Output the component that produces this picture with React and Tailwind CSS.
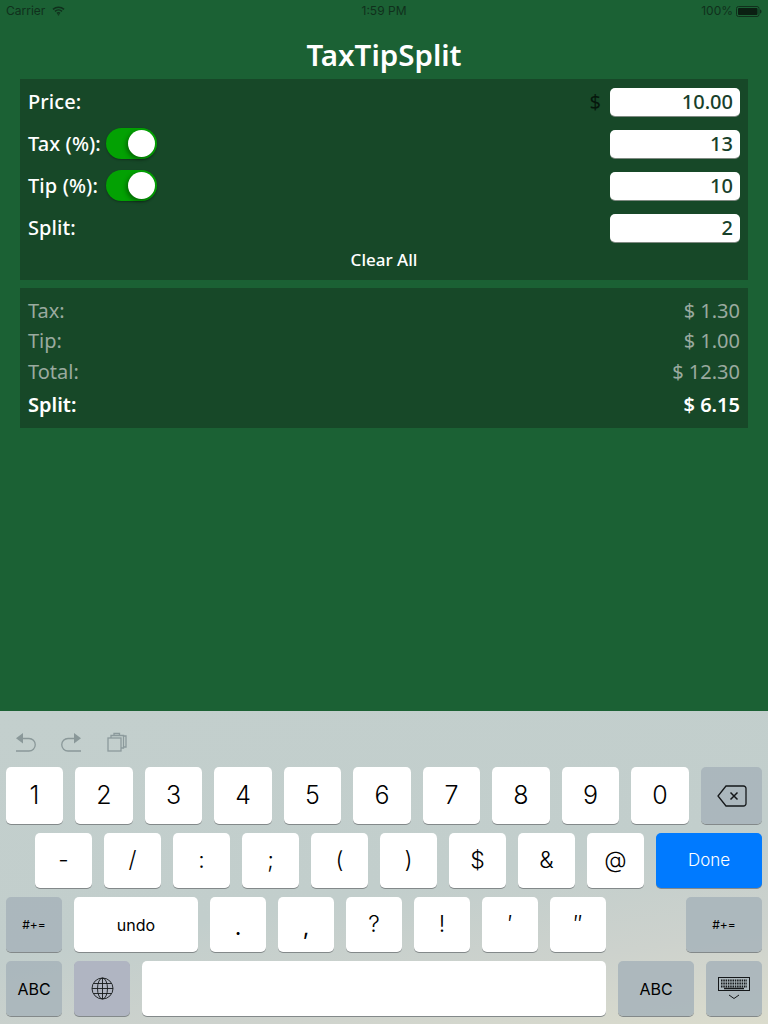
import React from "react";

const inputFont = "font-['Noto_Sans',sans-serif]";
const keyFont = "font-['Inter','Liberation_Sans',sans-serif]";

const Toggle = () => (
  <div className="flex h-[31px] w-[51px] items-center justify-end rounded-full bg-[#03a103] pr-[2px] shadow-[0_1px_2px_rgba(0,0,0,0.3)]">
    <div className="h-[27px] w-[27px] rounded-full bg-white shadow-[-2px_2px_4px_rgba(0,0,0,0.35)]" />
  </div>
);

const FormRow = ({ label, value, toggle, dollar }) => (
  <div className="flex h-[29px] items-center">
    <span className={`${toggle ? "w-[78px] " : ""}text-[20px] font-medium tracking-[0.1px] text-white`}>{label}</span>
    {toggle && <Toggle />}
    {dollar && <span className="ml-auto mr-[9px] text-[20px] text-[#06170c]">$</span>}
    <div className={`${dollar ? "" : "ml-auto "}flex h-[28px] w-[130px] items-center justify-end rounded-[5px] bg-white pr-[7px] text-[20px] font-medium text-[#17402a] shadow-[0_1px_0_#7f8a82]`}>
      {value}
    </div>
  </div>
);

const ResultRow = ({ label, value, h, bright }) => (
  <div className={`flex items-center justify-between ${h} ${bright ? "font-semibold text-white" : "text-[#9aaa9f]"} text-[20px]`}>
    <span>{label}</span>
    <span>{value}</span>
  </div>
);

const Key = ({ children, w, h = "h-[55px]", dark, blue, cls = "" }) => (
  <div
    className={`flex ${h} ${w} items-center justify-center rounded-[5px] shadow-[0_1px_0_#83898a] ${
      blue ? "bg-[#007aff] text-white" : dark ? "bg-[#a9b5bb]/90 text-black" : "bg-white text-black"
    } ${cls}`}
  >
    {children}
  </div>
);

const WifiIcon = () => (
  <svg width="13" height="10" viewBox="0 0 13 10" fill="none" stroke="#10301c" strokeWidth="1.5">
    <path d="M1 3.4C4.2.4 8.8.4 12 3.4" />
    <path d="M3 5.4c2-1.8 5-1.8 7 0" />
    <path d="M5 7.4c.9-.8 2.1-.8 3 0" />
    <path d="M6.5 9.8 5.4 8.6c.6-.5 1.6-.5 2.2 0z" fill="#10301c" stroke="none" />
  </svg>
);

const BatteryIcon = () => (
  <svg width="26" height="11" viewBox="0 0 26 11">
    <rect x=".5" y=".5" width="22.5" height="10" rx="2" fill="none" stroke="#10301c" />
    <rect x="2" y="2" width="19.5" height="7" rx="1" fill="#0b1f12" />
    <path d="M24 3.5c1 .2 1.5 1 1.5 2s-.5 1.800-1.500 2z" fill="#10301c" />
  </svg>
);

const UndoIcon = ({ flip }) => (
  <svg width="21" height="19" viewBox="0 0 21 19" fill="none" stroke="#8a9899" strokeWidth="1.3" className={flip ? "-scale-x-100" : ""}>
    <path d="M3 5.500h11a6 6 0 0 1 0 12.500H1" />
    <path d="M8 0 1 5.200 8 10.500z" fill="#8a9899" stroke="none" />
  </svg>
);

const PasteIcon = () => (
  <svg width="20" height="20" viewBox="0 0 20 20" fill="none" stroke="#8c9a9c" strokeWidth="1.300">
    <rect x="1" y="6" width="13" height="13" />
    <path d="M4 6V3.500h12.500V16H14" />
    <path d="M7 3.500V1.500h5.500V3.500" />
    <path d="M17 4h2v11h-2" />
  </svg>
);

const GlobeIcon = () => (
  <svg width="23" height="23" viewBox="0 0 23 23" fill="none" stroke="#15181a" strokeWidth="0.9">
    <circle cx="11.500" cy="11.500" r="10.500" />
    <ellipse cx="11.500" cy="11.500" rx="5" ry="10.500" />
    <path d="M11.500 1v21M1 11.500h21M2.500 6.500h18M2.500 16.500h18" />
  </svg>
);

const DeleteIcon = () => (
  <svg width="30" height="22" viewBox="0 0 30 22" fill="none" stroke="#15181a" strokeWidth="1.300">
    <path d="M9 1h17.500A2.500 2.500 0 0 1 29 3.500v15a2.500 2.500 0 0 1-2.500 2.500H9L1 11z" />
    <path d="m13.500 7.500 7 7M20.500 7.500l-7 7" strokeWidth="1.500" />
  </svg>
);

const KeyboardIcon = () => (
  <svg width="32" height="24" viewBox="0 0 32 24" fill="none" stroke="#15181a">
    <rect x=".5" y=".5" width="31" height="13" />
    <path d="M3 3.500h26M3 6.500h26M3 9.500h26" strokeWidth="2" strokeDasharray="1.500 0.800" />
    <path d="M6 11.500h20" strokeWidth="1.500" />
    <path d="m11 18 5 3.500 5-3.500" strokeWidth="1" />
  </svg>
);

const row1 = ["1", "2", "3", "4", "5", "6", "7", "8", "9", "0"];
const row2 = ["-", "/", ":", ";", "(", ")", "$", "&", "@"];
const row3 = [".", ",", "?", "!", "′", "″"];

export default function App() {
  return (
    <div className={`flex h-[1024px] w-[768px] flex-col overflow-hidden bg-[#1b6134] ${inputFont}`}>
      {/* status bar */}
      <div className={`flex h-[22px] items-center px-[6px] text-[12px] text-[#10301c] ${keyFont}`}>
        <div className="flex flex-1 items-center gap-[7px]">
          <span>Carrier</span>
          <WifiIcon />
        </div>
        <span>1:59 PM</span>
        <div className="flex flex-1 items-center justify-end gap-[3px]">
          <span>100%</span>
          <BatteryIcon />
        </div>
      </div>

      <h1 className="mt-[13px] h-[44px] text-center text-[29.5px] leading-[40px] font-semibold text-white">TaxTipSplit</h1>

      <div className="mx-5 flex h-[201px] flex-col bg-[#174828] px-2 pt-[8px]">
        <div className="flex flex-col gap-[13px]">
          <FormRow label="Price:" value="10.00" dollar />
          <FormRow label="Tax (%):" value="13" toggle />
          <FormRow label="Tip (%):" value="10" toggle />
          <FormRow label="Split:" value="2" />
        </div>
        <div className="mt-[5px] text-center text-[17px] font-medium text-white">Clear All</div>
      </div>

      <div className="mx-5 mt-2 h-[140px] bg-[#174828] px-2 pt-[8px]">
        <ResultRow h="h-[30px]" label="Tax:" value="$ 1.30" />
        <ResultRow h="h-[30px]" label="Tip:" value="$ 1.00" />
        <ResultRow h="h-[31px]" label="Total:" value="$ 12.30" />
        <ResultRow h="h-[36px]" label="Split:" value="$ 6.15" bright />
      </div>

      <div className="flex-1" />

      {/* keyboard */}
      <div className={`flex h-[313px] flex-col gap-[9px] bg-[linear-gradient(170deg,#c3cfcd_0%,#c2cecc_55%,#cdd2cd_78%,#dbdccd_100%)] px-[6px] pb-2 ${keyFont}`}>
        <div className="-mb-[9px] flex h-[56px] items-center gap-[25px] pl-[9px] pt-[6px]">
          <UndoIcon />
          <UndoIcon flip />
          <PasteIcon />
        </div>
        <div className="flex gap-3 text-[25px] font-light">
          {row1.map((k, i) => (
            <Key key={k} h="h-[57px]" w={i % 2 ? "w-[58px]" : "w-[57px]"}>{k}</Key>
          ))}
          <Key dark h="h-[57px]" w="w-[61px]"><DeleteIcon /></Key>
        </div>
        <div className="flex gap-3 pl-[29px] text-[23px] font-light">
          {row2.map((k) => (
            <Key key={k} w="w-[57px]">{k}</Key>
          ))}
          <Key blue w="w-[106px]" cls="text-[17px] font-light">Done</Key>
        </div>
        <div className="flex gap-3 text-[23px] font-light">
          <Key dark w="w-[56px]" cls="text-[12px] font-normal">#+=</Key>
          <Key w="w-[124px]" cls="text-[16px] font-normal">undo</Key>
          {row3.map((k, i) => (
            <Key key={k} w="w-[56px]" cls={i < 2 ? "pt-[6px] font-normal" : ""}>{k}</Key>
          ))}
          <Key dark w="w-[76px]" cls="ml-auto text-[12px] font-normal">#+=</Key>
        </div>
        <div className="flex gap-3">
          <Key dark w="w-[56px]" cls="text-[16px]">ABC</Key>
          <Key dark w="w-[56px]" cls="bg-[#b0b5c2]"><GlobeIcon /></Key>
          <Key w="w-[464px]" />
          <Key dark w="w-[76px]" cls="text-[16px]">ABC</Key>
          <Key dark w="w-[56px]"><KeyboardIcon /></Key>
        </div>
      </div>
    </div>
  );
}
